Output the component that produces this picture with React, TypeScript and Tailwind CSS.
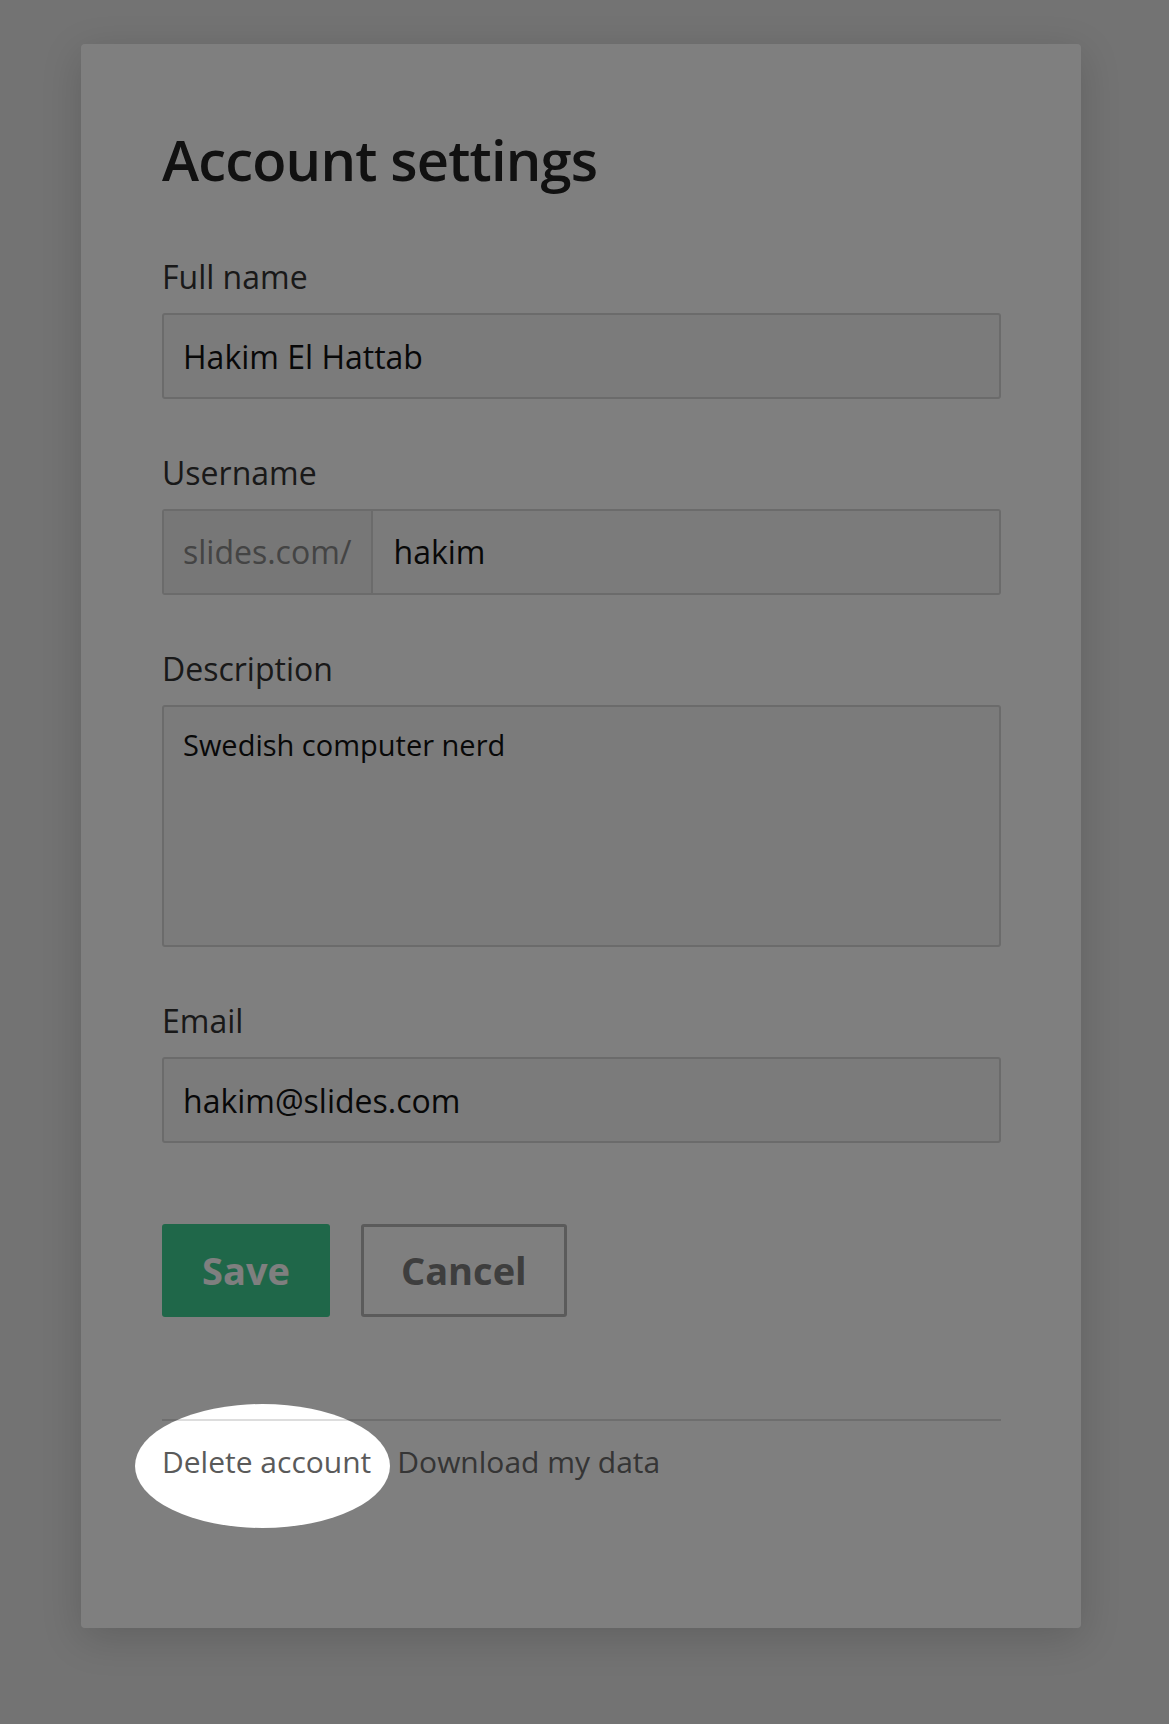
/**
 * Account settings form, with a spotlight on the "Delete account" link.
 */

function Label({ children }: { children: React.ReactNode }) {
  return <label className="block text-[32px] leading-[40px] text-[#333] mb-[16px]">{children}</label>;
}

export default function App() {
  return (
    <div className="relative overflow-hidden w-full h-[1724px] bg-[#e6e6e6] pt-[44px] font-['Open_Sans','DejaVu_Sans',sans-serif]">
      <div className="ml-[81px] w-[1000px] bg-white rounded-sm shadow-[0_10px_40px_rgba(0,0,0,0.16)] pt-[80px] pl-[81px] pb-[146px]">
        <div className="w-[839px]">
          <h1 className="text-[56px] leading-[70px] font-semibold tracking-[-0.8px] text-[#222] mb-[63px]">Account settings</h1>

          {/* Full name */}
          <div className="mb-[54px]">
            <Label>Full name</Label>
            <input
              type="text"
              defaultValue="Hakim El Hattab"
              className="block w-full h-[86px] border-2 border-[#d6d6d6] rounded-[3px] bg-[#f6f6f6] px-[19px] text-[32px] text-[#111] outline-none"
            />
          </div>

          {/* Username */}
          <div className="mb-[54px]">
            <Label>Username</Label>
            <div className="flex h-[86px] border-2 border-[#d6d6d6] rounded-[3px] overflow-hidden">
              <span className="flex items-center bg-[#eeeeee] border-r-2 border-[#d6d6d6] px-[19px] text-[32px] text-[#888]">slides.com/</span>
              <input
                type="text"
                defaultValue="hakim"
                className="flex-1 min-w-0 bg-[#f6f6f6] px-[21px] text-[32px] text-[#111] outline-none"
              />
            </div>
          </div>

          {/* Description */}
          <div className="mb-[54px]">
            <Label>Description</Label>
            <textarea
              defaultValue="Swedish computer nerd"
              className="block w-full h-[242px] resize-none border-2 border-[#d6d6d6] rounded-[3px] bg-[#f6f6f6] pt-[18px] px-[19px] text-[29px] leading-[40px] text-[#111] outline-none"
            />
          </div>

          {/* Email */}
          <div>
            <Label>Email</Label>
            <input
              type="text"
              defaultValue="hakim@slides.com"
              className="block w-full h-[86px] border-2 border-[#d6d6d6] rounded-[3px] bg-[#f6f6f6] px-[19px] text-[32px] text-[#111] outline-none"
            />
          </div>

          {/* Actions */}
          <div className="flex gap-[31px] mt-[81px]">
            <button className="h-[93px] px-[40px] rounded-[3px] bg-[#3ece92] text-white text-[38px] font-bold">Save</button>
            <button className="h-[93px] px-[37px] rounded-[3px] border-[3px] border-[#b6b6b6] bg-white text-[#7c7c7c] text-[38px] font-bold">Cancel</button>
          </div>

          {/* Footer links */}
          <div className="relative mt-[102px] border-t-2 border-[#dddddd] pt-[21px] flex gap-[26px] text-[30px] leading-[40px] text-[#6a6a6a]">
            <div className="absolute -top-[17px] -left-[27px] w-[255px] h-[124px] rounded-[50%] pointer-events-none z-10 shadow-[0_0_0_3000px_rgba(0,0,0,0.5)]" />
            <a href="#" className="text-[#5a5a5a]">Delete account</a>
            <a href="#">Download my data</a>
          </div>
        </div>
      </div>
    </div>
  );
}
